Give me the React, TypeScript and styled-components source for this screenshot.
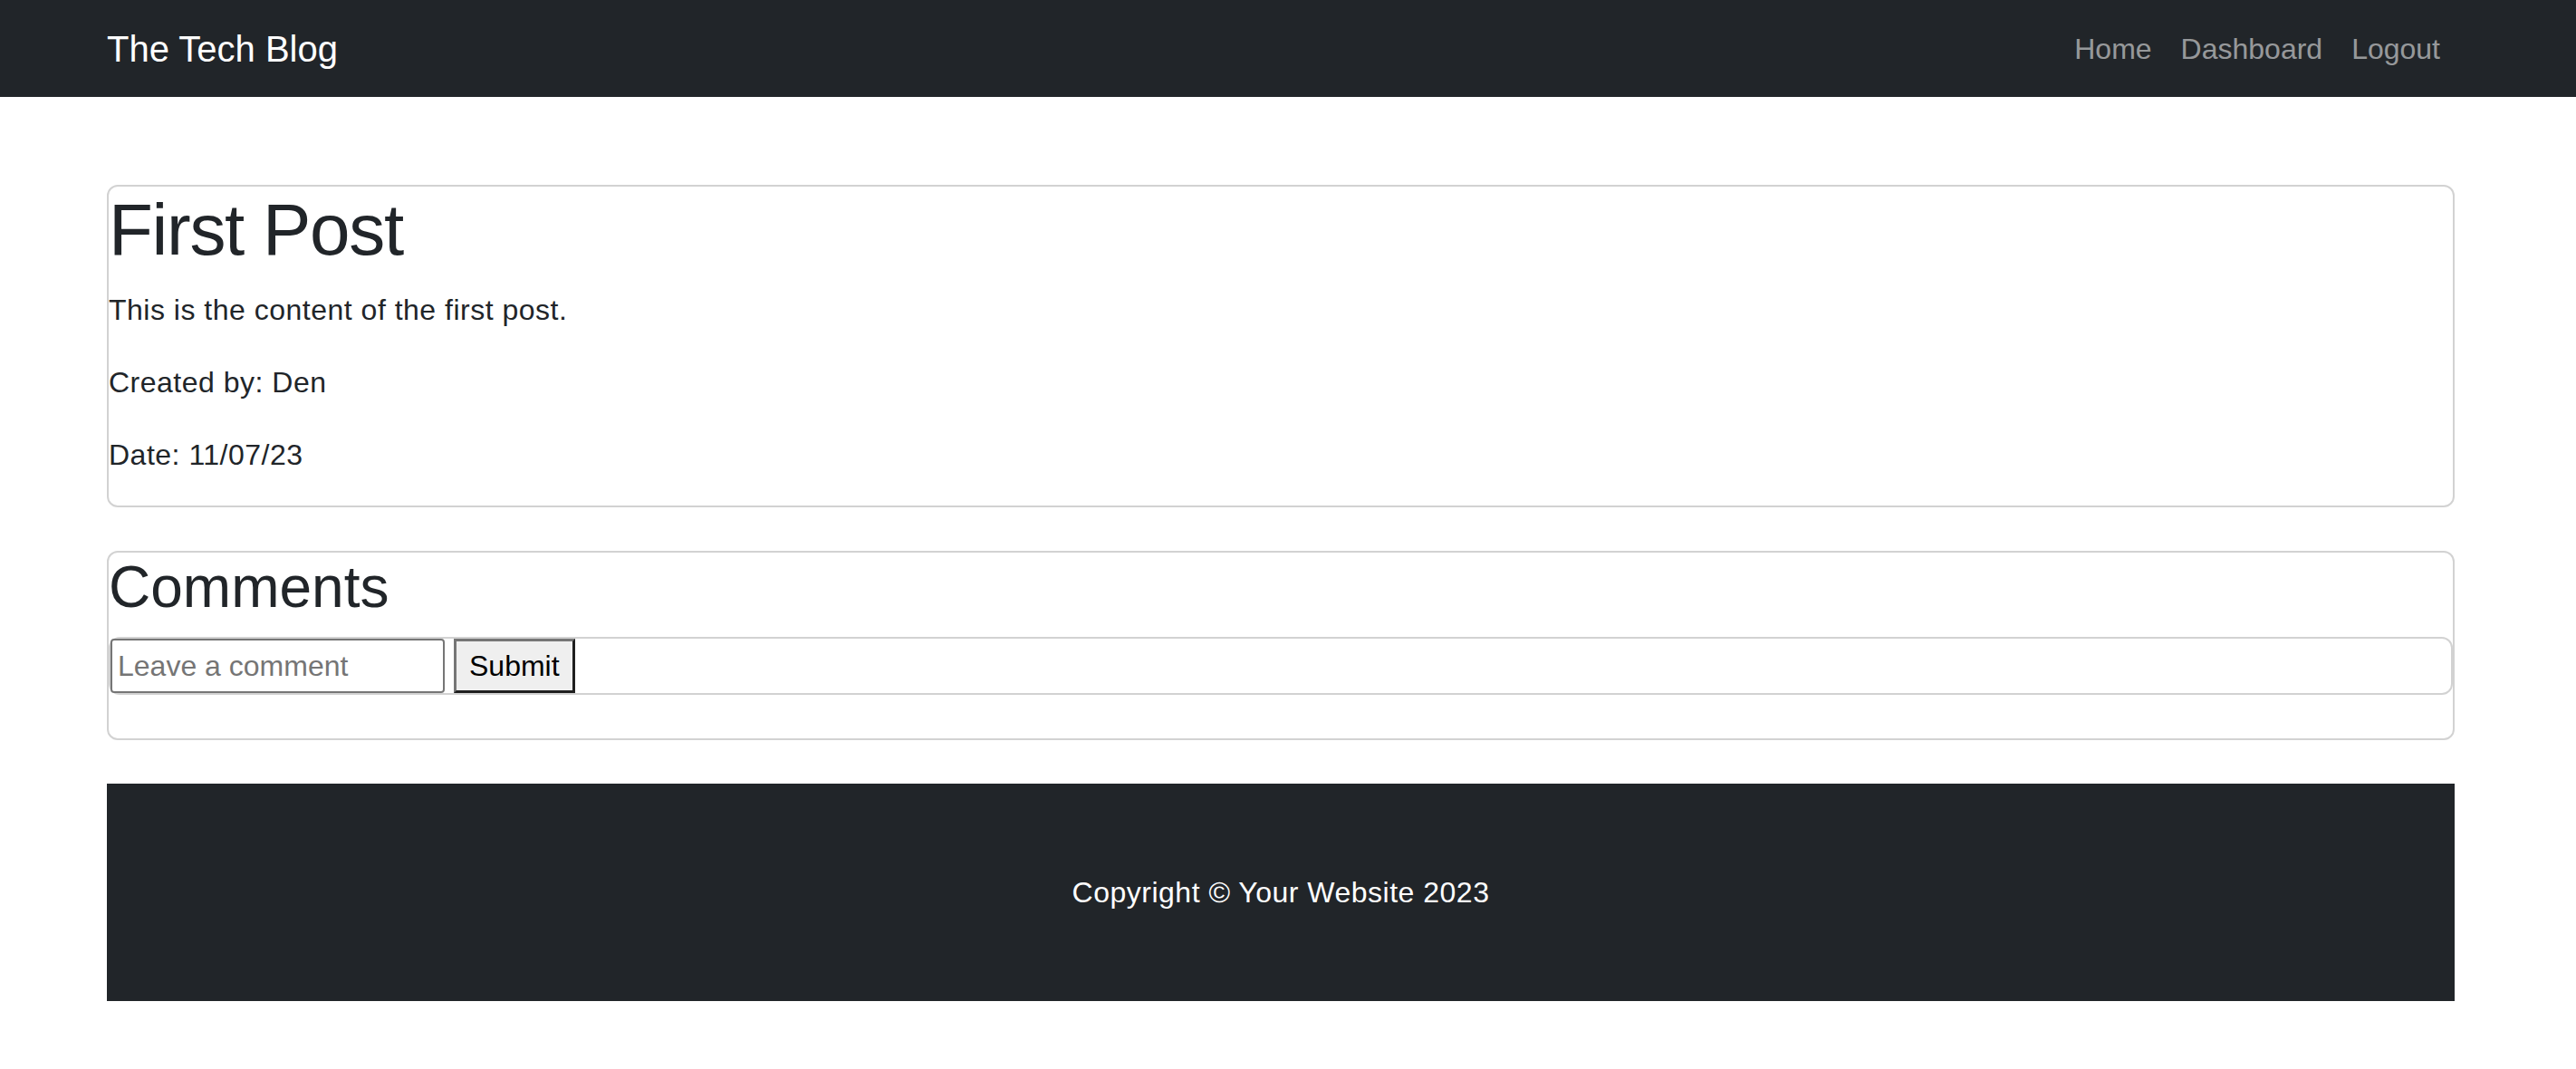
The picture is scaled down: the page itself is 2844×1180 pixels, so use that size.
import styled, { createGlobalStyle } from "styled-components";

const GlobalStyle = createGlobalStyle`
  * {
    box-sizing: border-box;
  }
  body {
    margin: 0;
    background: #fff;
    color: #212529;
    font-family: "Liberation Sans", Arial, sans-serif;
    font-size: 32px;
    line-height: 1.5;
  }
`;

const Container = styled.div`
  width: 2592px;
  margin-left: 118px;
`;

const Navbar = styled.nav`
  background-color: #212529;
  height: 107px;
  display: flex;
  align-items: center;
`;

const NavInner = styled(Container)`
  display: flex;
  justify-content: space-between;
  align-items: center;
`;

const Brand = styled.a`
  color: #fff;
  font-size: 40px;
  line-height: 60px;
  text-decoration: none;
`;

const NavList = styled.ul`
  display: flex;
  list-style: none;
  margin: 0;
  padding: 0;
`;

const NavLink = styled.a`
  display: block;
  padding: 0 16px;
  color: rgba(255, 255, 255, 0.55);
  text-decoration: none;
  line-height: 48px;
`;

const Main = styled(Container)`
  margin-top: 97px;
`;

const Card = styled.section`
  border: 2px solid rgba(0, 0, 0, 0.175);
  border-radius: 12px;
  margin-bottom: 48px;
`;

const Title = styled.h1<{ $size: number; $tracking?: number }>`
  margin: 0 0 16px;
  font-size: ${(props) => props.$size}px;
  font-weight: 500;
  line-height: 1.2;
  letter-spacing: ${(props) => props.$tracking ?? 0}px;
  color: #212529;
`;

const Text = styled.p`
  margin: 0 0 32px;
  letter-spacing: 0.5px;
`;

const CommentForm = styled.form`
  display: flex;
  gap: 10px;
  border: 2px solid rgba(0, 0, 0, 0.175);
  border-radius: 12px;
  margin-bottom: 48px;
`;

const CommentInput = styled.input`
  width: 369px;
  padding: 4px 6px;
  border: 2px solid #767676;
  border-radius: 4px;
  font: inherit;
  line-height: 48px;
  color: #000;
  &::placeholder {
    color: #757575;
  }
`;

const SubmitButton = styled.button`
  padding: 0 14px;
  background: #efefef;
  border-style: solid;
  border-width: 3px;
  border-color: #767676 #1f1f1f #1f1f1f #767676;
  border-radius: 0;
  font: inherit;
  color: #000;
`;

const Footer = styled(Container)`
  padding: 96px 0;
  background-color: #212529;
  color: #fff;
  text-align: center;
  letter-spacing: 0.5px;
`;

const App = () => {
  return (
    <>
      <GlobalStyle />
      <Navbar>
        <NavInner>
          <Brand href="#">The Tech Blog</Brand>
          <NavList>
            <li>
              <NavLink href="#">Home</NavLink>
            </li>
            <li>
              <NavLink href="#">Dashboard</NavLink>
            </li>
            <li>
              <NavLink href="#">Logout</NavLink>
            </li>
          </NavList>
        </NavInner>
      </Navbar>
      <Main as="main">
        <Card>
          <Title $size={80} $tracking={-1.3}>
            First Post
          </Title>
          <Text>This is the content of the first post.</Text>
          <Text>Created by: Den</Text>
          <Text>Date: 11/07/23</Text>
        </Card>
        <Card>
          <Title as="h2" $size={64}>
            Comments
          </Title>
          <CommentForm onSubmit={(e) => e.preventDefault()}>
            <CommentInput type="text" placeholder="Leave a comment" />
            <SubmitButton type="submit">Submit</SubmitButton>
          </CommentForm>
        </Card>
      </Main>
      <Footer as="footer">Copyright © Your Website 2023</Footer>
    </>
  );
};

export default App;
